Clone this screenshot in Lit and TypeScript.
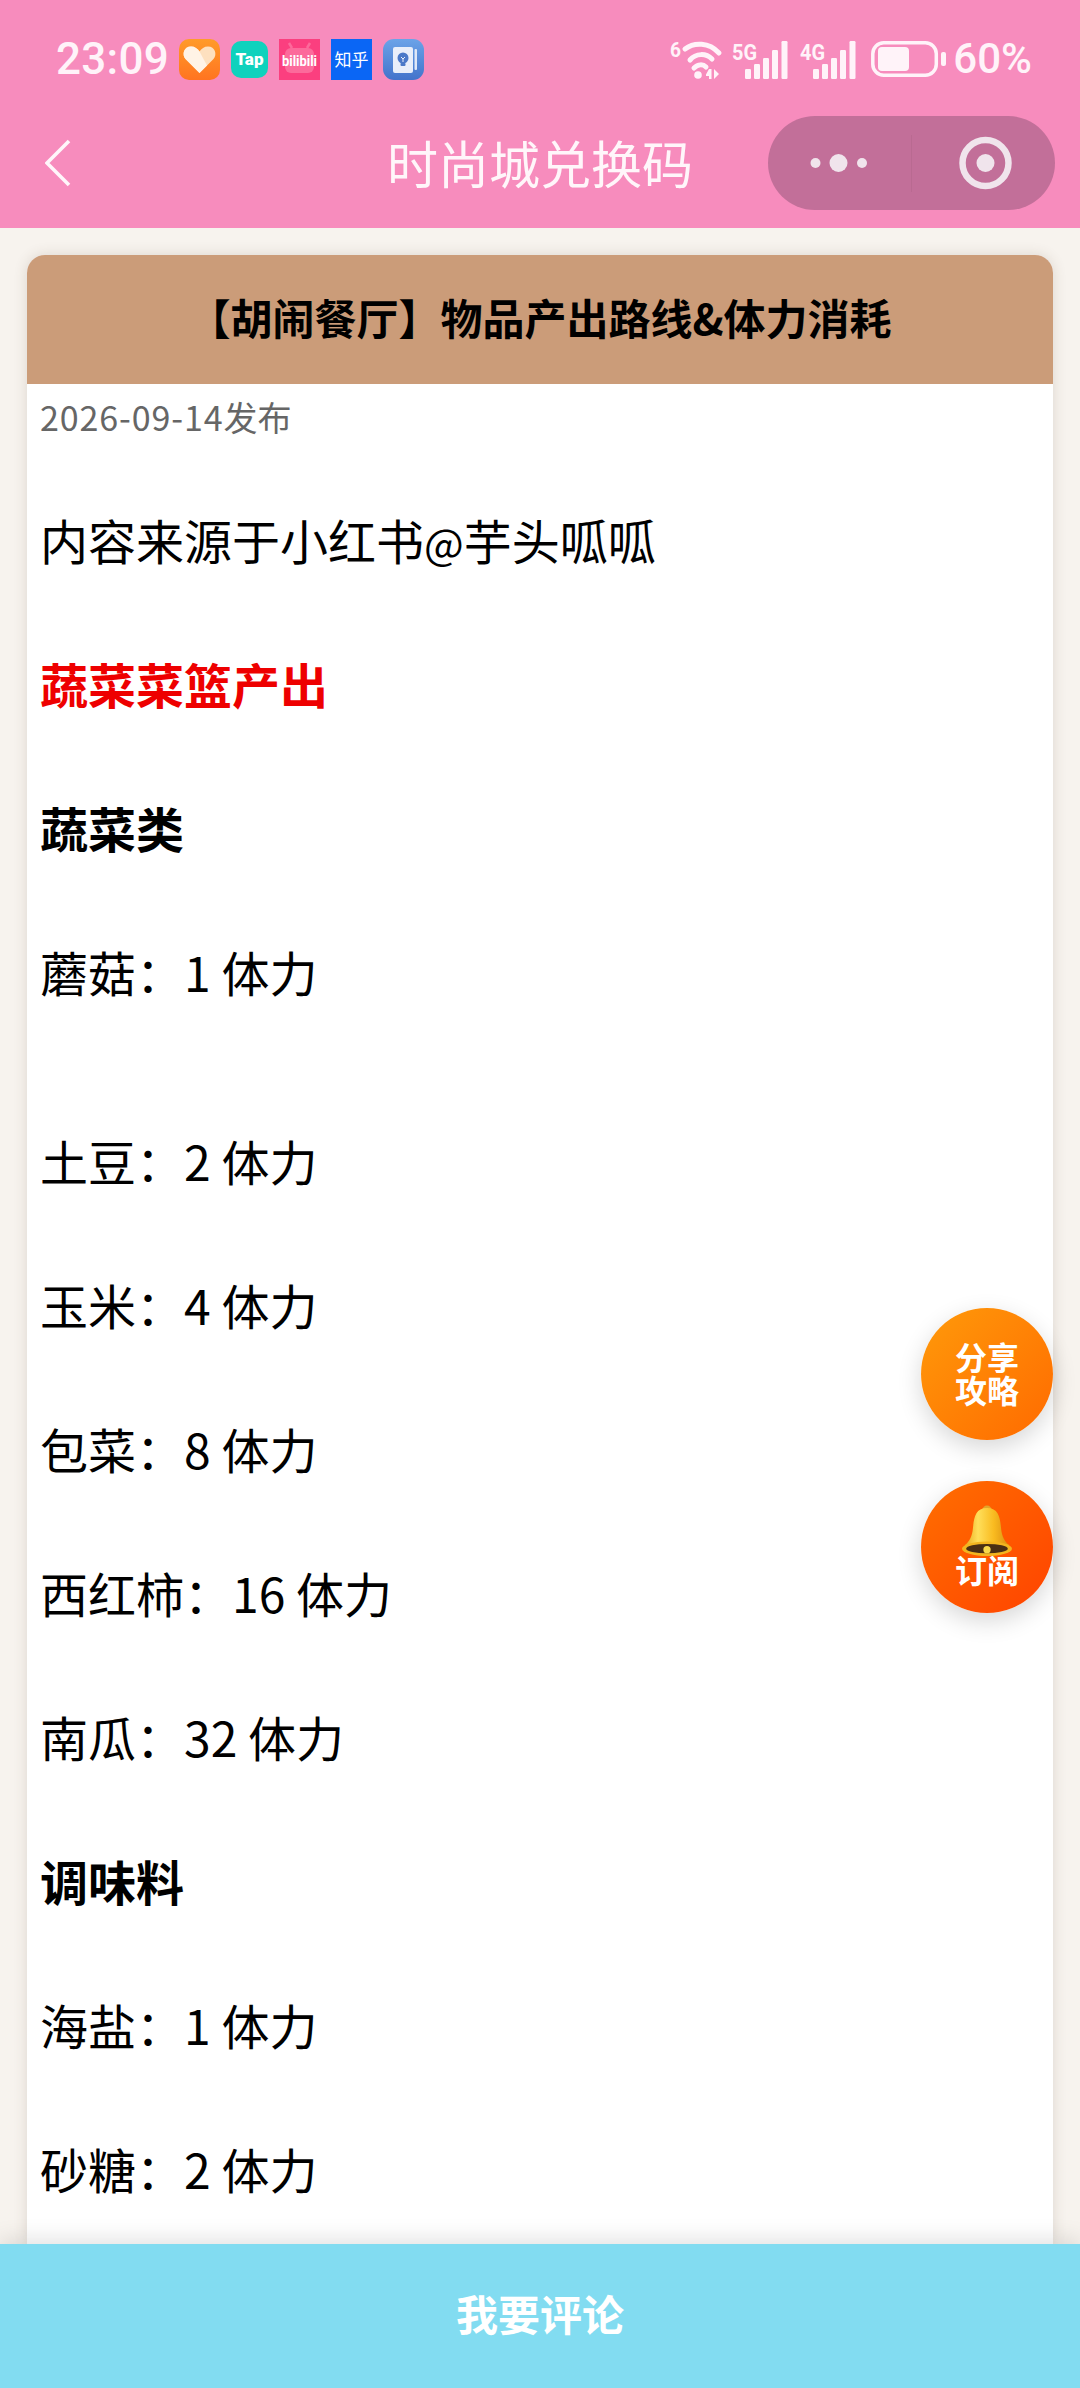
import { LitElement, html, css } from "lit";
import { customElement } from "lit/decorators.js";

type Line = { t: unknown; k?: string };
const LINES: Line[] = [
  { t: html`内容来源于小红书<span class="at">@</span>芋头呱呱` },
  { t: "蔬菜菜篮产出", k: "red" },
  { t: "蔬菜类", k: "bold" },
  { t: "蘑菇：1 体力" },
  { t: "", k: "gap" },
  { t: "土豆：2 体力" },
  { t: "玉米：4 体力" },
  { t: "包菜：8 体力" },
  { t: "西红柿：16 体力" },
  { t: "南瓜：32 体力" },
  { t: "调味料", k: "bold" },
  { t: "海盐：1 体力" },
  { t: "砂糖：2 体力" },
];

const signal = (label: string) => html`<svg class="sig" width="56" height="40" viewBox="0 0 56 40">
  <text class="net" x="0" y="21" textLength="25" lengthAdjust="spacingAndGlyphs">${label}</text>
  <rect x="13" y="30" width="6" height="10" rx="1.2"/>
  <rect x="22" y="25" width="6" height="15" rx="1.2"/>
  <rect x="31" y="19" width="6" height="21" rx="1.2"/>
  <rect x="40" y="11" width="6" height="29" rx="1.2"/>
  <rect x="49.500" y="2" width="6" height="38" rx="1.2"/>
</svg>`;

@customElement("app-root")
export class AppRoot extends LitElement {
  static styles = css`
    :host { display: block; width: 1080px; height: 2388px; }
    * { box-sizing: border-box; }
    .page {
      position: relative; width: 1080px; height: 2388px; overflow: hidden;
      display: flex; flex-direction: column; background: #f7f3ee;
      font-family: "Noto Sans CJK SC", "Noto Sans", sans-serif;
    }
    .head { background: #f78cbd; flex: none; height: 228px; }
    .status {
      height: 116px; padding: 2px 48px 0 56px; display: flex; align-items: center;
      justify-content: space-between; color: #fff3f9;
    }
    .left, .right { display: flex; align-items: center; }
    .time { font: 500 44px/1 Roboto, sans-serif; width: 123px; letter-spacing: 0.3px; }
    .apps { display: flex; align-items: center; gap: 11px; }
    .apps svg { display: block; }
    .right svg { display: block; fill: #fff3f9; overflow: visible; }
    .wifi { margin-right: 9px; }
    .sig { margin-right: 12px; }
    .batt { margin: 0 7px 0 3px; }
    .net { font: 700 22px Roboto, sans-serif; fill: #fff3f9; }
    .six { font: 700 21px Roboto, sans-serif; fill: #fff3f9; }
    .pct { font: 500 42px/1 Roboto, sans-serif; }
    .nav {
      height: 112px; padding: 0 25px 18px; display: grid;
      grid-template-columns: minmax(0, 1fr) auto minmax(0, 1fr); align-items: center;
    }
    .back { display: block; margin-left: 20px; }
    .title { font-size: 51px; line-height: 92px; margin-bottom: 2px; color: #fff6fa; font-weight: 400; }
    .capsule {
      justify-self: end; width: 287px; height: 94px; border-radius: 47px;
      background: #c26f99; display: flex; align-items: center;
    }
    .main { flex: 1; min-height: 0; padding: 27px 27px 0; }
    .card {
      background: #fff; border-radius: 18px 18px 0 0; height: 100%;
      box-shadow: 0 0 14px rgba(90, 70, 50, 0.16); overflow: hidden;
    }
    .card-h {
      height: 129px; background: #cb9c79; color: #000; display: flex;
      align-items: center; justify-content: center; font-size: 42px; font-weight: 700;
      padding-bottom: 7px;
    }
    .body { padding: 0 13px; }
    .date { font-size: 34px; line-height: 66px; color: #666; }
    .date span { letter-spacing: 0.9px; }
    .content { padding-top: 53px; }
    .content p {
      margin: 0 0 72px; font-size: 48px; line-height: 72px; color: #000;
    }
    .content p.bold { font-weight: 700; }
    .content p.red { font-weight: 700; color: #ee0000; }
    .content p.gap { height: 45px; margin: 0; line-height: 45px; }
    .at { font-size: 42px; line-height: 1; }
    .fabs {
      position: absolute; right: 27px; top: 1308px; display: flex;
      flex-direction: column; gap: 41px;
    }
    .fab {
      width: 132px; height: 132px; border-radius: 50%; color: #fff; font-size: 32px;
      font-weight: 700; line-height: 33px; display: flex; flex-direction: column;
      align-items: center; justify-content: center; text-align: center;
      box-shadow: 0 8px 24px rgba(0, 0, 0, 0.16);
    }
    .fab.share { background: linear-gradient(135deg, #ff9a0a, #ff6a00); padding-bottom: 3px; }
    .fab.sub { background: linear-gradient(135deg, #ff6f00, #ff4300); justify-content: flex-start; padding-top: 24px; }
    .fab.sub svg { display: block; margin-bottom: -4px; }
    .bar {
      flex: none; height: 144px; background: #82dcf1; color: #fff; font-size: 42px;
      font-weight: 700; display: flex; align-items: center; justify-content: center;
      box-shadow: 0 -4px 22px rgba(0, 0, 0, 0.12); position: relative; padding-bottom: 7px;
    }
    .atext { font-family: "Noto Sans CJK SC", sans-serif; fill: #fff; }
    .tap { font: 900 17px Roboto, sans-serif; fill: #fff; }
    .bili { font: 700 14px Roboto, sans-serif; fill: #fff; }
    .zhi { font-size: 17px; }
  `;

  private apps() {
    return html`<div class="apps">
      <svg width="41" height="41" viewBox="0 0 41 41">
        <defs>
          <linearGradient id="o" x1="0" y1="0" x2="0" y2="1"><stop offset="0" stop-color="#ff9b2a"/><stop offset="1" stop-color="#ff7420"/></linearGradient>
        </defs>
        <rect width="41" height="41" rx="10" fill="url(#o)"/>
        <path d="M20.500 34 L6.500 20 C2.500 15.500 5 7.500 12 7.500 C15.800 7.500 18.500 9.500 20.500 12.500 C22.500 9.500 25.200 7.500 29 7.500 C36 7.500 38.500 15.500 34.500 20 Z" fill="#fde0bf"/>
        <path d="M20.500 34 L6.500 20 C2.500 15.500 5 7.500 12 7.500 C15.800 7.500 18.500 9.500 20.500 12.500 L28 26.500 Z" fill="#fff3e6"/>
      </svg>
      <svg width="37" height="37" viewBox="0 0 37 37">
        <rect width="37" height="37" rx="10" fill="#0fd2bd"/>
        <text class="tap" x="18.500" y="24" text-anchor="middle">Tap</text>
      </svg>
      <svg width="41" height="41" viewBox="0 0 41 41">
        <rect width="41" height="41" fill="#fb3f7f"/>
        <rect x="6" y="9" width="29" height="25" rx="6" fill="#fc6a9b"/>
        <path d="M13 9 L10 4 M28 9 L31 4" stroke="#fc6a9b" stroke-width="2.500"/>
        <text class="bili" x="20.500" y="27" text-anchor="middle" textLength="35" lengthAdjust="spacingAndGlyphs">bilibili</text>
      </svg>
      <svg width="41" height="41" viewBox="0 0 41 41">
        <rect width="41" height="41" fill="#0a66f5"/>
        <text x="20.500" y="27" text-anchor="middle" class="atext zhi">知乎</text>
      </svg>
      <svg width="41" height="41" viewBox="0 0 41 41">
        <defs>
          <linearGradient id="b" x1="0" y1="0" x2="0" y2="1"><stop offset="0" stop-color="#6ba3e8"/><stop offset="1" stop-color="#4373cb"/></linearGradient>
        </defs>
        <rect width="41" height="41" rx="11" fill="url(#b)"/>
        <rect x="10" y="8" width="20" height="26" rx="2" fill="#e8eefa"/>
        <rect x="31.500" y="10" width="2.500" height="21" rx="1" fill="#dfe8f8"/>
        <circle cx="20" cy="19" r="5.500" fill="#4a78c8"/>
        <rect x="17.500" y="24" width="5" height="3" rx="1" fill="#4a78c8"/>
        <path d="M18 18 L20 20 L22 18 M20 20 V23" stroke="#e8eefa" stroke-width="1" fill="none"/>
      </svg>
    </div>`;
  }

  private bell() {
    return html`<svg width="52" height="52" viewBox="0 0 50 50">
      <defs>
        <linearGradient id="g" x1="0" y1="0" x2="1" y2="0">
          <stop offset="0" stop-color="#e8a81c"/><stop offset="0.3" stop-color="#ffdf5a"/><stop offset="0.65" stop-color="#f9bb20"/><stop offset="1" stop-color="#d98d10"/>
        </linearGradient>
      </defs>
      <circle cx="25" cy="5" r="4.500" fill="#e3a52a"/>
      <path d="M25 3 C14 3 12.500 12 11.500 22 C10.800 30 8 35 3.500 39 H46.500 C42 35 39.200 30 38.500 22 C37.500 12 36 3 25 3 Z" fill="url(#g)"/>
      <ellipse cx="25" cy="42" rx="24" ry="7" fill="#f3b51f"/>
      <ellipse cx="25" cy="42" rx="20" ry="4.500" fill="#4a2f14"/>
      <circle cx="25" cy="43" r="3.500" fill="#f7d84a"/>
    </svg>`;
  }

  render() {
    return html`<div class="page">
      <div class="head">
        <div class="status">
          <div class="left"><span class="time">23:09</span>${this.apps()}</div>
          <div class="right">
            <svg class="wifi" width="53" height="40" viewBox="0 0 53 40">
              <text class="six" x="0" y="18" textLength="11" lengthAdjust="spacingAndGlyphs">6</text>
              <g fill="none" stroke="#fff3f9" stroke-width="5" stroke-linecap="round">
                <path d="M15 10 C24 3 39 3 49 14"/>
                <path d="M20 21 C26 14 36 14 42 20"/>
                <path d="M24 29 C28 25 33 25 36 28"/>
              </g>
              <circle cx="28" cy="36" r="3.800"/>
              <path d="M39 30 V40 H41.500 V30 Z M36 35.500 L39 30 V37 H36 Z M44 30 V40 L49 35 Z"/>
            </svg>
            ${signal("5G")}
            ${signal("4G")}
            <svg class="batt" width="75" height="36" viewBox="0 0 75 36">
              <rect x="1.800" y="1.800" width="63.500" height="32.400" rx="11" fill="none" stroke="#fff3f9" stroke-width="3.500"/>
              <rect x="7" y="6" width="31" height="24" rx="4"/>
              <rect x="70" y="11" width="5" height="14" rx="2"/>
            </svg>
            <span class="pct">60%</span>
          </div>
        </div>
        <div class="nav">
          <svg class="back" width="26" height="48" viewBox="0 0 26 48">
            <path d="M24 2 L2 24 L24 46" fill="none" stroke="#fff6fa" stroke-width="3.600"/>
          </svg>
          <div class="title">时尚城兑换码</div>
          <div class="capsule">
            <svg width="287" height="94" viewBox="0 0 287 94">
              <g fill="#f0e4ec">
                <circle cx="47.500" cy="47" r="5"/>
                <circle cx="70.500" cy="47" r="9"/>
                <circle cx="94" cy="47" r="5"/>
                <circle cx="217.500" cy="47" r="9"/>
              </g>
              <circle cx="217.500" cy="47" r="23" fill="none" stroke="#f0e4ec" stroke-width="6.500"/>
              <rect x="143" y="19" width="1" height="57" fill="#b96a91"/>
            </svg>
          </div>
        </div>
      </div>
      <div class="main">
        <div class="card">
          <div class="card-h">【胡闹餐厅】物品产出路线&体力消耗</div>
          <div class="body">
            <div class="date"><span>2026-09-14</span>发布</div>
            <div class="content">
              ${LINES.map((l) => html`<p class=${l.k ?? ""}>${l.t}</p>`)}
            </div>
          </div>
        </div>
      </div>
      <div class="bar">我要评论</div>
      <div class="fabs">
        <div class="fab share"><span>分享</span><span>攻略</span></div>
        <div class="fab sub">${this.bell()}<span>订阅</span></div>
      </div>
    </div>`;
  }
}
